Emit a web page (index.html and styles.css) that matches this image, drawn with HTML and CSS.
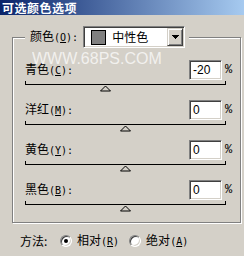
FILE: index.html
```html
<!DOCTYPE html>
<html lang="zh-CN">
<head>
    <meta charset="UTF-8">
    <meta name="viewport" content="width=device-width, initial-scale=1.0">
    <title>可选颜色选项</title>
    <link rel="stylesheet" href="styles.css">
</head>
<body>
    <div class="titlebar">可选颜色选项</div>

    <fieldset class="group">
        <legend>
            <span class="legend-row">
                <span class="label">颜色<span class="key">(<u>O</u>):</span></span>
                <span class="combo">
                    <span class="swatch"></span>
                    <span class="combo-text">中性色</span>
                    <span class="combo-btn">
                        <svg width="7" height="4" viewBox="0 0 7 4"><path d="M0 0h7v1h-1v1h-1v1h-1v1h-1v-1h-1v-1h-1v-1h-1z" fill="#000"/></svg>
                    </span>
                </span>
            </span>
        </legend>

        <!-- 青色 -->
        <div class="slider">
            <div class="slider-head">
                <span class="label">青色<span class="key">(<u>C</u>):</span></span>
                <span class="field">-20</span>
                <span class="pct">%</span>
            </div>
            <svg class="track" width="208" height="20" viewBox="0 0 208 20">
                <path d="M0.5 1V4.5H200.5V1" fill="none" stroke="#000" shape-rendering="crispEdges"/>
                <path d="M80.5 6L85.5 11H75.5Z" fill="none" stroke="#000"/>
            </svg>
        </div>

        <!-- 洋红 -->
        <div class="slider">
            <div class="slider-head">
                <span class="label">洋红<span class="key">(<u>M</u>):</span></span>
                <span class="field">0</span>
                <span class="pct">%</span>
            </div>
            <svg class="track" width="208" height="20" viewBox="0 0 208 20">
                <path d="M0.5 1V4.5H200.5V1" fill="none" stroke="#000" shape-rendering="crispEdges"/>
                <path d="M100.5 6L105.5 11H95.5Z" fill="none" stroke="#000"/>
            </svg>
        </div>

        <!-- 黄色 -->
        <div class="slider">
            <div class="slider-head">
                <span class="label">黄色<span class="key">(<u>Y</u>):</span></span>
                <span class="field">0</span>
                <span class="pct">%</span>
            </div>
            <svg class="track" width="208" height="20" viewBox="0 0 208 20">
                <path d="M0.5 1V4.5H200.5V1" fill="none" stroke="#000" shape-rendering="crispEdges"/>
                <path d="M100.5 6L105.5 11H95.5Z" fill="none" stroke="#000"/>
            </svg>
        </div>

        <!-- 黑色 -->
        <div class="slider">
            <div class="slider-head">
                <span class="label">黑色<span class="key">(<u>B</u>):</span></span>
                <span class="field">0</span>
                <span class="pct">%</span>
            </div>
            <svg class="track" width="208" height="20" viewBox="0 0 208 20">
                <path d="M0.5 1V4.5H200.5V1" fill="none" stroke="#000" shape-rendering="crispEdges"/>
                <path d="M100.5 6L105.5 11H95.5Z" fill="none" stroke="#000"/>
            </svg>
        </div>
    </fieldset>

    <div class="method">
        <span class="method-label">方法:</span>
        <span class="option">
            <span class="radio checked"></span>
            <span>相对<span class="key">(<u>R</u>)</span></span>
        </span>
        <span class="option">
            <span class="radio"></span>
            <span>绝对<span class="key">(<u>A</u>)</span></span>
        </span>
    </div>

    <div class="watermark">WWW.68PS.COM</div>
</body>
</html>
```

FILE: styles.css
```css
body {
    margin: 0;
    width: 244px;
    height: 256px;
    overflow: hidden;
    position: relative;
    background-color: #d4d0c8;
    font-family: "Noto Sans CJK SC", sans-serif;
    font-size: 12px;
    line-height: 14px;
    color: #000;
}
.titlebar {
    height: 15px;
    line-height: 15px;
    padding-left: 2px;
    background: linear-gradient(to right, #0a246a, #a6caf0);
    color: #fff;
    font-weight: bold;
    letter-spacing: 0.5px;
}
.key {
    font-family: "DejaVu Sans Mono", monospace;
    font-size: 10px;
}
.group {
    margin: 11px 3px 0 12px;
    padding: 12px 7px 2px 12px;
    min-width: 0;
    border: 1px solid #808080;
    box-shadow: 1px 1px 0 #fff, inset 1px 1px 0 #fff;
}
.group legend {
    padding: 0 4px 0 5px;
    background-color: #d4d0c8;
}
.legend-row {
    display: flex;
    align-items: center;
    height: 22px;
}
.combo {
    display: flex;
    align-items: center;
    box-sizing: border-box;
    width: 102px;
    height: 22px;
    margin-left: 5px;
    padding: 1px;
    background-color: #fff;
    border: 1px solid;
    border-color: #808080 #fff #fff #808080;
    box-shadow: inset 1px 1px 0 #404040, inset -1px -1px 0 #d4d0c8;
}
.swatch {
    box-sizing: border-box;
    width: 15px;
    height: 15px;
    margin-left: 6px;
    border: 1px solid #000;
    background-color: #808080;
}
.combo-text {
    margin-left: 6px;
}
.combo-btn {
    display: flex;
    align-items: center;
    justify-content: center;
    box-sizing: border-box;
    width: 16px;
    height: 18px;
    margin-left: auto;
    background-color: #d4d0c8;
    border: 1px solid;
    border-color: #d4d0c8 #404040 #404040 #d4d0c8;
    box-shadow: inset 1px 1px 0 #fff, inset -1px -1px 0 #808080;
}
.combo-btn svg {
    display: block;
}
.slider {
    height: 40px;
}
.slider-head {
    display: flex;
    align-items: center;
    height: 20px;
}
.slider-head .label {
    flex: 1;
}
.field {
    box-sizing: border-box;
    width: 33px;
    height: 20px;
    margin-right: 3px;
    padding-left: 3px;
    background-color: #fff;
    border: 1px solid;
    border-color: #808080 #fff #fff #808080;
    box-shadow: inset 1px 1px 0 #404040, inset -1px -1px 0 #d4d0c8;
    font-family: "Liberation Sans", sans-serif;
    font-size: 12px;
    line-height: 18px;
}
.pct {
    width: 8px;
    font-family: "Liberation Mono", monospace;
    font-size: 12px;
}
.track {
    display: block;
}
.method {
    display: flex;
    align-items: center;
    height: 14px;
    margin-top: 11px;
    padding-left: 20px;
}
.method-label {
    width: 40px;
}
.option {
    display: flex;
    align-items: center;
    gap: 5px;
}
.option + .option {
    margin-left: 10px;
}
.radio {
    position: relative;
    box-sizing: border-box;
    width: 12px;
    height: 12px;
    border-radius: 50%;
    background-color: #fff;
    border: 1px solid;
    border-color: #808080 #fff #fff #808080;
    box-shadow: inset 1px 1px 0 #404040, inset -1px -1px 0 #d4d0c8;
}
.radio.checked::after {
    content: "";
    position: absolute;
    left: 3px;
    top: 3px;
    width: 4px;
    height: 4px;
    border-radius: 50%;
    background-color: #000;
}
.watermark {
    position: absolute;
    left: 32px;
    top: 51px;
    font-family: "Liberation Sans", sans-serif;
    font-size: 16px;
    line-height: 16px;
    color: #fff;
    opacity: 0.7;
    pointer-events: none;
}
```
